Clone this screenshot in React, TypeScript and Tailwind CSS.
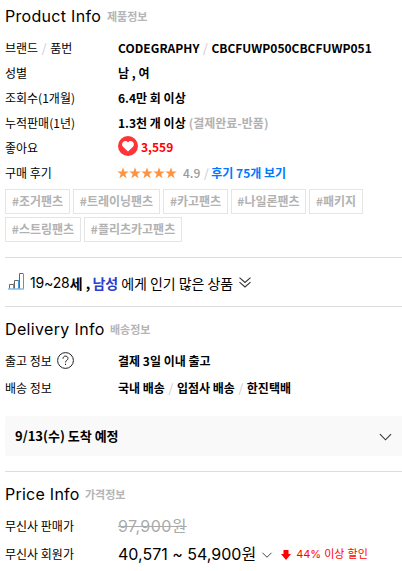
import type { ReactNode } from 'react';

const latin = "font-['Inter','Noto_Sans_CJK_KR',sans-serif]";

function Heading({ title, sub, className }: { title: string; sub: string; className: string }) {
  return (
    <h2 className="flex h-8 items-center whitespace-nowrap">
      <span className={`${latin} text-[16px] ${className}`}>{title}</span>
      <span className="ml-[5px] text-[11px] font-bold text-[#b5b5b5]">{sub}</span>
    </h2>
  );
}

function Row({ label, className, children }: { label: ReactNode; className: string; children: ReactNode }) {
  return (
    <div className={`flex items-center whitespace-nowrap ${className}`}>
      <div className="flex w-[113px] shrink-0 items-center">{label}</div>
      <div className="flex items-center font-bold">{children}</div>
    </div>
  );
}

function Slash() {
  return <span className="w-3 text-center font-normal text-[#c8c8c8]">/</span>;
}

function Tag({ text, className }: { text: string; className: string }) {
  return (
    <span className={`flex h-[25px] items-center justify-center border border-[#e5e5e5] pb-px text-[12px] font-bold text-[#b2b2b2] ${className}`}>
      {text}
    </span>
  );
}

function Chevron({ className }: { className: string }) {
  return (
    <svg className={className} viewBox="0 0 14 8" fill="none" stroke="#333" strokeWidth="1.2">
      <path d="M1 1l6 6 6-6" />
    </svg>
  );
}

function Star() {
  return (
    <svg className="size-3" viewBox="0 0 12 12" fill="#ff9440">
      <path d="M6 .2l1.4 4.2h4.3L8.3 7l1.3 4.2L6 8.7l-3.6 2.5L3.7 7 .3 4.4h4.3z" />
    </svg>
  );
}

export default function App() {
  return (
    <main className="h-[571px] w-[402px] overflow-hidden bg-white pl-[5px] font-['Noto_Sans_CJK_KR',sans-serif] text-[12px] leading-[18px] text-black">
      <section className="h-[257px]">
        <Heading title="Product Info" sub="제품정보" className="w-[97px] tracking-[0.3px]" />
        <div className="mt-[3px]">
          <Row className="h-[25px]" label={<>브랜드<Slash />품번</>}>
            <span className="tracking-[0.04px]">CODEGRAPHY</span><Slash /><span>CBCFUWP050CBCFUWP051</span>
          </Row>
          <Row className="h-[25px]" label="성별">남 , 여</Row>
          <Row className="h-[25px]" label="조회수(1개월)">6.4만 회 이상</Row>
          <Row className="h-[25px]" label="누적판매(1년)">
            1.3천 개 이상<span className="ml-[3px] font-bold text-[#b2b2b2]">(결제완료-반품)</span>
          </Row>
          <Row className="h-[25px]" label="좋아요">
            <svg className="-mt-[3px] mr-[3px] size-5" viewBox="0 0 20 20">
              <circle cx="10" cy="10" r="10" fill="#ff3439" />
              <path d="M10 15.6L5.2 11C2 7.8 6.6 2.6 10 6.4c3.4-3.8 8 1.4 4.8 4.6z" fill="#fff" />
            </svg>
            <span className="-mt-px text-[#f00]">3,559</span>
          </Row>
          <Row className="h-[25px]" label="구매 후기">
            <span className="-ml-px flex"><Star /><Star /><Star /><Star /><Star /></span>
            <span className="ml-1.5 font-medium text-[#999]">4.9</span>
            <Slash /><span className="-ml-px text-[#0078ff]">후기 75개 보기</span>
          </Row>
        </div>
        <div className="mt-1 flex flex-wrap gap-[3px]">
          <Tag text="#조거팬츠" className="w-[65px]" />
          <Tag text="#트레이닝팬츠" className="w-[87px]" />
          <Tag text="#카고팬츠" className="w-[65px]" />
          <Tag text="#나일론팬츠" className="w-[75px]" />
          <Tag text="#패키지" className="w-[54px]" />
          <Tag text="#스트링팬츠" className="w-[76px]" />
          <Tag text="#플리츠카고팬츠" className="w-[98px]" />
        </div>
      </section>

      <section className="flex h-[49px] items-center whitespace-nowrap border-t border-[#ddd] pt-px text-[14px]">
        <svg className="-mt-0.5 ml-[3px] mr-1.5 h-[17px] w-4" viewBox="0 0 16 17" fill="none">
          <path d="M1.5 15.5v-4h4M6.5 15.5v-8h4M11.5 15.5V.5H15" stroke="#666" />
          <path d="M5.5 10.5v5M10.5 7v8.5M15.5 .5v15M0 16h16" stroke="#4a9ad8" />
        </svg>
        <span className={`${latin} text-[14px] tracking-[-0.15px]`}>19~28</span>
        <b>세 ,&nbsp;</b>
        <b className="-ml-px text-[#2a3fd0]">남성</b>
        <span className="ml-[3px] tracking-[-0.05px]">에게 인기 많은 상품</span>
        <svg className="ml-1.5 h-[11px] w-3" viewBox="0 0 12 11" fill="none" stroke="#333" strokeWidth="1.1">
          <path d="M.5.7L6 5.5 11.5.7M.5 5.2L6 10l5.5-4.8" />
        </svg>
      </section>

      <section className="h-[165px] border-t border-[#ddd] pt-1.5">
        <Heading title="Delivery Info" sub="배송정보" className="w-[100px] tracking-[0.35px]" />
        <Row
          className="mt-0.5 h-[27px]"
          label={<>출고 정보
            <svg className="ml-[5px] size-[17px]" viewBox="0 0 17 17" fill="none" stroke="#222">
              <circle cx="8.5" cy="8.5" r="7.9" />
              <path d="M6 6.7c0-3.5 5-3.4 5-.3 0 2.1-2.5 1.7-2.5 4M8.5 11.7v1.3" />
            </svg>
          </>}
        >
          결제 3일 이내 출고
        </Row>
        <Row className="h-[27px]" label="배송 정보">국내 배송<Slash />입점사 배송<Slash />한진택배</Row>
        <div className="mt-[15px] flex h-10 w-[397px] items-center justify-between rounded-l-[3px] bg-[#f9f9f9] pl-2.5 pr-2.5 text-[13px] font-bold">
          <span>9/13(수) 도착 예정</span>
          <Chevron className="mt-0.5 h-[8px] w-[13px]" />
        </div>
      </section>

      <section className="border-t border-[#ddd] pt-1.5">
        <Heading title="Price Info" sub="가격정보" className="w-[75px] tracking-[0.25px]" />
        <Row className="mt-0.5 h-7" label="무신사 판매가">
          <span className={`${latin} text-[16px] font-normal tracking-[0.4px] text-[#aaa] line-through`}>97,900원</span>
        </Row>
        <Row className="h-7" label="무신사 회원가">
          <span className={`${latin} text-[16px] font-normal`}>40,571 ~ 54,900원</span>
          <Chevron className="ml-[5px] mt-0.5 h-[6px] w-3" />
          <svg className="ml-2 mt-0.5 size-[10px]" viewBox="0 0 10 10" fill="#f00">
            <path d="M2.5 0h5v4H10L5 10 0 4h2.5z" />
          </svg>
          <span className={`${latin} ml-[5px] text-[11px] font-normal text-[#f00]`}>44% 이상 할인</span>
        </Row>
      </section>
    </main>
  );
}
